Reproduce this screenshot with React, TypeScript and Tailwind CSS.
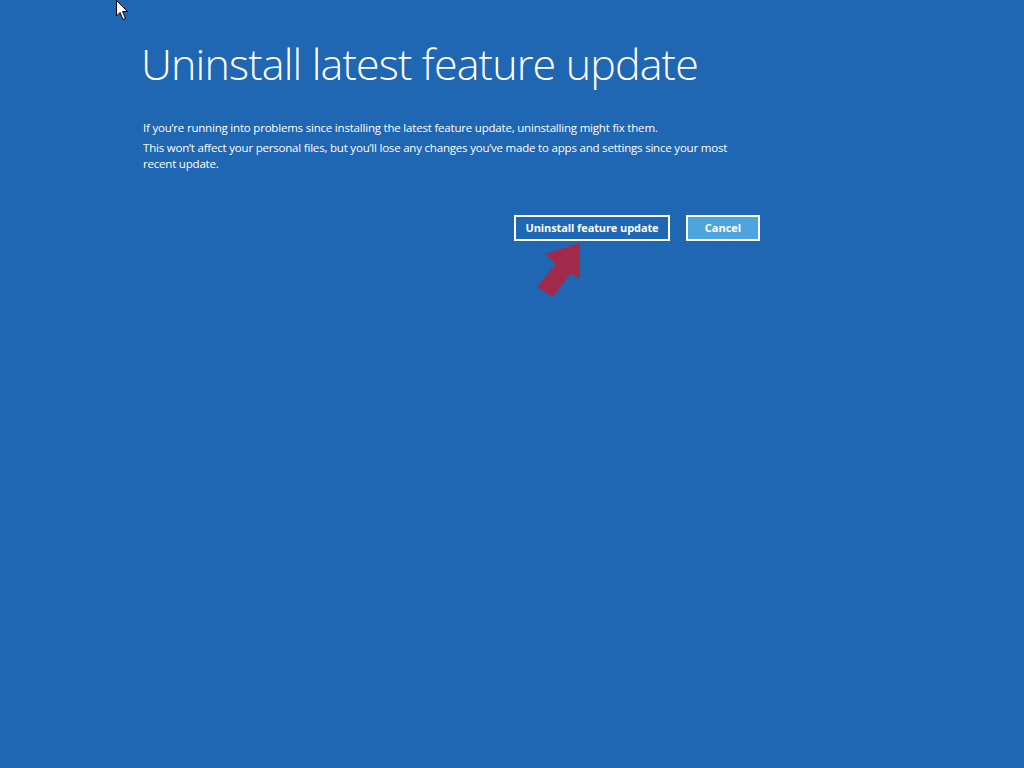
import React from "react";

export default function App() {
  return (
    <div className="relative w-[1024px] h-[768px] overflow-hidden bg-[#1f66b3] text-white" style={{ fontFamily: '"Open Sans", "Noto Sans", sans-serif' }}>
      {/* mouse cursor */}
      <svg className="absolute left-[116px] top-0" width="14" height="22" viewBox="0 0 14 22">
        <path d="M0.5 0.5 L0.5 16 L4 12.5 L7 19.5 L9.5 18.5 L6.5 11.5 L11.5 11.5 Z" fill="#fff" stroke="#000" strokeWidth="1" />
      </svg>

      <div className="pl-[141px] pt-[34px] w-[762px]">
        <h1 className="text-[43px] font-light leading-[60px] tracking-[-0.85px]">Uninstall latest feature update</h1>
        <div className="mt-[26px] ml-[2px] text-[11.5px] leading-[16px] tracking-[-0.2px] w-[600px]">
          <p>If you’re running into problems since installing the latest feature update, uninstalling might fix them.</p>
          <p className="mt-[4px]">This won’t affect your personal files, but you’ll lose any changes you’ve made to apps and settings since your most recent update.</p>
        </div>
        <div className="mt-[43px] flex justify-end gap-[16px] pr-[2px]">
          <button className="h-[26px] w-[156px] border-2 border-white text-[11px] font-bold leading-none tracking-[-0.1px] pb-[1px]">Uninstall feature update</button>
          <button className="h-[26px] w-[74px] border-2 border-white bg-[#4ea5de] text-[11px] font-bold leading-none pb-[1px]">Cancel</button>
        </div>
      </div>

      {/* annotation arrow */}
      <svg className="absolute left-0 top-0 pointer-events-none" width="1024" height="768">
        <polygon points="580,243 545,254 556,264 537,287 553,297 570,274 580,278" fill="#a12a4b" />
      </svg>
    </div>
  );
}
